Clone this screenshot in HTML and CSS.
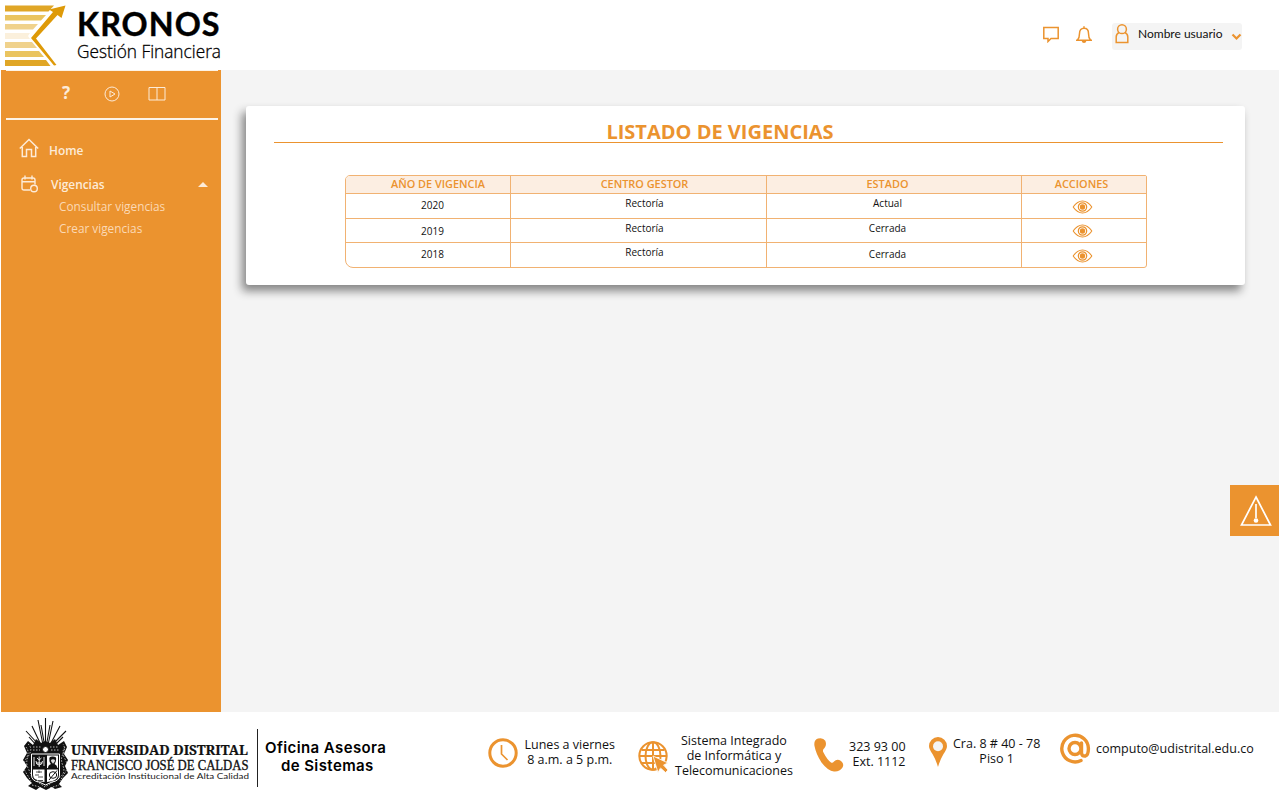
FILE: index.html
```html
<!DOCTYPE html>
<html lang="es">
<head>
<meta charset="utf-8">
<title>Kronos - Listado de vigencias</title>
<link rel="stylesheet" href="styles.css">
</head>
<body>
<header class="topbar">
  <svg class="brand" width="240" height="70" viewBox="0 0 240 70">
    <g>
      <path fill="#e0a626" d="M5 5.500H54L48.500 11.500H5z"/>
      <path fill="#eac45f" d="M5 15H46L41 20.500H5z"/>
      <path fill="#f0d28c" d="M5 24H38L33 29.500H5z"/>
      <path fill="#fbf0dc" d="M5 33H30L28 36L30 39H5z"/>
      <path fill="#f0d28c" d="M5 42H32L37 48H5z"/>
      <path fill="#eac45f" d="M5 51H39L44 57H5z"/>
      <path fill="#e0a626" d="M5 60H46L50.500 66H5z"/>
    </g>
    <path fill="#de9a08" d="M65.500 5.500L49 9.500L53 12L31 38L54 65.500L56.500 65L36 38.500L57.500 15L61.500 18z"/>
    <text class="brand-name" x="77" y="36" textLength="143.500" lengthAdjust="spacingAndGlyphs">KRONOS</text>
    <text class="brand-sub" x="77" y="57.500" textLength="144" lengthAdjust="spacingAndGlyphs">Gestión Financiera</text>
  </svg>
  <div class="actions">
    <svg width="16" height="17" viewBox="0 0 16 17"><path class="line" d="M.8 1.500H15.200V12.500H8L5 15.500V12.500H.8z"/></svg>
    <svg class="bell" width="18" height="18" viewBox="0 0 18 18"><path class="line" d="M1 14.200H17M2.500 14Q4.500 12 4.500 7.500C4.500 4 6.300 2.300 9 2.300S13.500 4 13.500 7.500Q13.500 12 15.500 14M9 .3V2"/><path fill="#eb932f" d="M6.500 14.500H11.500Q11 17 9 17T6.500 14.500"/></svg>
    <div class="user">
      <svg width="14" height="20" viewBox="0 0 14 20"><circle class="line" cx="7" cy="5.200" r="4.400"/><path class="line" d="M4 8.500Q1.200 10 1.200 13V18.500H12.800V13Q12.800 10 10 8.500"/></svg>
      <span>Nombre usuario</span>
      <svg width="11" height="8" viewBox="0 0 11 8"><path class="thick" d="M1.500 1.500L5.500 5.500L9.500 1.500"/></svg>
    </div>
  </div>
</header>
<div class="workspace">
  <nav class="sidebar">
    <div class="tools">
      <strong>?</strong>
      <svg class="play" width="16" height="16" viewBox="0 0 16 16"><circle cx="8" cy="8" r="7"/><path d="M6 5V11L11 8z"/></svg>
      <svg class="book" width="18" height="15" viewBox="0 0 18 15"><path d="M1 1.500H17V14H1zM9 1.500V14"/></svg>
    </div>
    <a class="item home">
      <svg width="20" height="20" viewBox="0 0 20 20"><path d="M.8 10.500L10 1.500L19.200 10.500M3.300 9V18.500H7.500V11.500H12.500V18.500H16.700V9"/></svg>
      <span>Home</span>
    </a>
    <a class="item group">
      <svg width="18" height="18" viewBox="0 0 18 18"><path d="M9 15H3Q1 15 1 13V5Q1 3 3 3H12Q14 3 14 5V9.500M1 6.700H14M4 .5V4.500M11 .5V4.500"/><circle cx="13" cy="13.500" r="3.300"/></svg>
      <span>Vigencias</span>
      <i class="caret"></i>
    </a>
    <a class="sub">Consultar vigencias</a>
    <a class="sub">Crear vigencias</a>
  </nav>
  <main class="content">
    <section class="card">
      <h1>LISTADO DE VIGENCIAS</h1>
      <div class="table">
        <div class="row head"><b>AÑO DE VIGENCIA</b><b>CENTRO GESTOR</b><b>ESTADO</b><b>ACCIONES</b></div>
        <div class="row r1"><span>2020</span><span>Rectoría</span><span>Actual</span><span><svg class="eye" width="20" height="14" viewBox="0 0 20 14"><path d="M.6 7Q5 1 10 1T19.400 7Q15 13 10 13T.6 7z"/><circle cx="10" cy="7" r="4.200"/><circle class="dot" cx="10" cy="7" r="2.700"/></svg></span></div>
        <div class="row r2"><span>2019</span><span>Rectoría</span><span>Cerrada</span><span><svg class="eye" width="20" height="14" viewBox="0 0 20 14"><path d="M.6 7Q5 1 10 1T19.400 7Q15 13 10 13T.6 7z"/><circle cx="10" cy="7" r="4.200"/><circle class="dot" cx="10" cy="7" r="2.700"/></svg></span></div>
        <div class="row r3"><span>2018</span><span>Rectoría</span><span>Cerrada</span><span><svg class="eye" width="20" height="14" viewBox="0 0 20 14"><path d="M.6 7Q5 1 10 1T19.400 7Q15 13 10 13T.6 7z"/><circle cx="10" cy="7" r="4.200"/><circle class="dot" cx="10" cy="7" r="2.700"/></svg></span></div>
      </div>
    </section>
    <div class="alert">
      <svg width="32" height="32" viewBox="0 0 32 32"><path d="M16 2L30.500 30H1.500z"/><path d="M16 9V23"/><circle cx="16" cy="25.500" r="2.300"/></svg>
    </div>
  </main>
</div>
<footer class="footer">
  <svg class="university" width="257" height="88" viewBox="0 0 257 88">
    <g stroke="#111" stroke-width="1.100" fill="none">
      <path d="M45.500 34V6M43 33L38 8M48 33L53 9M41 33L32 14M50 33L60 14M39 33L26 19M52 33L66 19M37 34L29 25M54 34L63 25M44 30L41 13M47 30L50 13"/>
    </g>
    <path fill="#111" d="M28 29L33 33L36 27L41 31L45 29L50 31L55 27L58 33L64 29L67 35L64 42L68 48L65 54L68 61L63 66L59 72L62 75L55 77L52 75L46 78L40 75L36 78L28 74L32 71L27 66L23 60L27 54L23 48L27 41L24 34z"/>
    <path fill="none" stroke="#fff" stroke-width=".7" stroke-dasharray="1.500 1.500" d="M28 32Q33 36 29 43T28 56T32 66L45 75L59 66Q66 61 63 54T63 42T63 32M26 35Q30 40 26 47T25 59T31 69M65 35Q61 40 65 47T66 59T60 69M32 73L40 75M50 76L59 73M33 35H41M50 35H59M33 38H40M51 38H59"/>
    <path fill="#111" stroke="#fff" d="M31.500 42H59.500V63Q59.500 69 52 70L45.500 73L39 70Q31.500 69 31.500 63z"/>
    <path fill="#fff" d="M47 43.500H58V56H47zM33 57.500H44.500V70Q33 69 33 63zM47 57.500H58V63Q58 69 47 70z"/>
    <circle cx="45.500" cy="37.500" r="3" fill="#fff" stroke="#111"/>
    <path fill="#111" d="M48 56Q48 53 51 52Q49 50 49.500 48Q48.500 44 53 44.500Q57 44.500 56 48Q56 50 54.500 52Q57 53 57.500 56z"/>
    <path fill="#ddd" d="M51 48Q53 46.500 55 48Q55 51 53 51.500Q51 51 51 48z"/>
    <path fill="none" stroke="#222" stroke-width=".8" d="M36 60H42M39 58.500V61M35 63H39M38 65H43M35 68H37M38 68.500H43"/>
    <path fill="none" stroke="#fff" stroke-width=".9" d="M39.200 44.500V55M37 46L39.200 48L41.500 46M36 49Q36 53 39.200 53T42.500 49M36.500 51H42M34 45V54M44 45V54"/>
    <path fill="none" stroke="#111" d="M49 68L57 58.500"/><ellipse cx="53" cy="63" rx="3.700" ry="3.300" fill="none" stroke="#111"/>
    <text class="uni-bold" x="71" y="43.300" textLength="177" lengthAdjust="spacingAndGlyphs">UNIVERSIDAD DISTRITAL</text>
    <text class="uni-name" x="71" y="58" textLength="177.500" lengthAdjust="spacingAndGlyphs">FRANCISCO JOSÉ DE CALDAS</text>
    <text class="uni-small" x="71" y="66.800" textLength="178" lengthAdjust="spacingAndGlyphs">Acreditación Institucional de Alta Calidad</text>
  </svg>
  <div class="office"><span>Oficina Asesora</span><span class="second">de Sistemas</span></div>
  <div class="contact hours">
    <svg width="30" height="30" viewBox="0 0 30 30"><circle cx="15" cy="15" r="13.200" fill="none" stroke="#eb932f" stroke-width="3"/><path fill="none" stroke="#eb932f" stroke-width="1.700" d="M13.500 7V16L19.500 22"/></svg>
    <p>Lunes a viernes<br>8 a.m. a 5 p.m.</p>
  </div>
  <div class="contact system">
    <svg width="31" height="32" viewBox="0 0 31 32"><g fill="none" stroke="#eb932f" stroke-width="2"><circle cx="15" cy="15" r="13.700"/><ellipse cx="15" cy="15" rx="7.500" ry="13.700"/><path d="M15 1V29M1.500 15H29M3.500 9H26.500M3.500 22H26.500"/></g><path fill="#eb932f" stroke="#fff" stroke-width=".8" d="M15 15L30 22L25.500 24L30 29L27.500 31.500L22.500 27L20 31.500z"/></svg>
    <p>Sistema Integrado<br>de Informática y<br>Telecomunicaciones</p>
  </div>
  <div class="contact phone">
    <svg width="30" height="34" viewBox="0 0 30 34"><path fill="#eb932f" d="M.5 8Q-.5 2 4 .6Q9-.8 11.300 2.800Q13 7 10.500 10Q8 12 9.500 14.500Q13 21.500 17 24.500Q18.500 25.500 20 23.500Q23 20.500 27 23Q30.500 26 28.500 29.500Q25.500 34 20 33.500Q14 33 7.500 24.500Q2 16 .5 8z"/></svg>
    <p>323 93 00<br>Ext. 1112</p>
  </div>
  <div class="contact address">
    <svg width="18" height="30" viewBox="0 0 18 30"><path fill="#eb932f" d="M9 30Q7 23 3.500 17Q0 12 0 9A9 9 0 0 1 18 9Q18 12 14.500 17Q11 23 9 30z"/><circle cx="9" cy="9.300" r="5" fill="#f4f4f4"/></svg>
    <p>Cra. 8 # 40 - 78<br>Piso 1</p>
  </div>
  <div class="contact mail">
    <svg width="31" height="31" viewBox="0 0 31 31"><g fill="none" stroke="#eb932f" stroke-width="3.400" stroke-linecap="round"><circle cx="15" cy="15.500" r="6"/><path d="M21.500 10V20Q22 23.500 25.500 23Q28.300 22 28.400 16A13.300 13.300 0 1 0 21 27.500"/></g></svg>
    <p>computo@udistrital.edu.co</p>
  </div>
</footer>
</body>
</html>
```

FILE: styles.css
```css
* { box-sizing: border-box; }
body { margin: 0; width: 1279px; height: 800px; overflow: hidden; background: #fff; font-family: "Open Sans", sans-serif; color: #111; }
svg { display: block; flex: none; }

.topbar { height: 70px; display: flex; justify-content: space-between; }
.brand-name { font: 700 31.500px Lato, sans-serif; fill: #000; stroke: #000; stroke-width: .4px; letter-spacing: 1px; }
.brand-sub { font: 300 18px "Open Sans", sans-serif; fill: #000; stroke: #000; stroke-width: .3px; }
.actions { display: flex; align-items: flex-start; padding: 23px 37px 0 0; }
.actions > svg { margin-top: 3px; margin-right: 16px; }
.actions > .bell { margin-right: 19px; }
.line { fill: none; stroke: #eb932f; stroke-width: 1.500; }
.thick { fill: none; stroke: #eb932f; stroke-width: 2.200; }
.user { width: 130px; height: 27px; display: flex; align-items: center; padding-left: 3px; background: #f4f4f4; border-radius: 3px; font: 12px/22px Lato, sans-serif; }
.user > svg:first-child { margin-top: -6px; }
.user span { width: 102px; padding: 0 0 5px 9px; white-space: nowrap; }

.workspace { display: flex; height: 642px; padding-left: 1px; }
.sidebar { width: 220px; flex: none; background: #eb932f; color: #fdebd8; }
.tools { height: 50px; margin: 0 3px 0 5px; display: flex; align-items: flex-start; border-top: 1px solid #fdf3e6; border-bottom: 2px solid #fdf3e6; padding: 11px 0 0 56px; }
.tools strong { width: 8px; font: 700 17px/22px "Noto Sans", sans-serif; }
.tools svg, .item svg { fill: none; stroke: #fdebd8; stroke-width: 1; }
.tools .play { margin: 4px 0 0 34px; }
.tools .book { margin: 4px 0 0 28px; }
.item { display: flex; align-items: center; font-size: 11.900px; font-weight: 600; }
.home { height: 20px; margin: 18px 0 0 18px; }
.item.home svg { stroke-width: 1.500; }
.home span { padding: 3px 0 0 10px; }
.group { height: 18px; margin: 17px 0 0 20px; }
.group span { padding: 0 0 1px 12px; width: 160px; }
.item.group svg { stroke-width: 1.400; }
.caret { border: 5px solid transparent; border-top: 0; border-bottom: 5px solid #fdebd8; margin-left: -1px; }
.sub { display: block; height: 22px; padding-left: 58px; font-size: 11.800px; line-height: 22px; color: #fbd9b5; }
.group + .sub { margin-top: 2px; }

.content { flex: 1; background: #f4f4f4; padding: 36px 0 0 25px; }
.card { width: 999px; height: 179px; padding: 14px 22px 0 28px; background: #fff; border-radius: 3px; box-shadow: -4px 6px 10px rgba(0,0,0,.46); }
h1 { margin: 0; height: 23px; padding-right: 57px; border-bottom: 1px solid #eb932f; font-size: 20px; line-height: 23px; font-weight: 700; text-align: center; color: #eb932f; }
.table { width: 802px; margin: 32px 0 0 71px; border: 1px solid #f1b272; border-radius: 5px 2px 3px 8px; overflow: hidden; font-size: 10px; line-height: 14px; }
.row { display: grid; grid-template-columns: 164px 256px 255px 1fr; height: 24.700px; border-top: 1px solid #f1b272; text-align: center; }
.row > * + * { border-left: 1px solid #f1b272; }
.row.head { height: 17px; border-top: 0; background: #fceee2; color: #eb932f; font-size: 10.900px; line-height: 15px; }
.row b { font-weight: 600; }
.row > :nth-child(1) { padding-left: 9px; }
.head > :nth-child(1) { padding-left: 20px; }
.row > :nth-child(2) { padding-left: 12px; }
.row > :nth-child(3) { padding-right: 13px; }
.row > :nth-child(4) { padding-right: 5px; }
.row span { padding-top: 2px; }
.r1 span:first-child, .r3 span:first-child, .r3 span:nth-child(3) { padding-top: 4px; }
.r2 span:first-child { padding-top: 5px; }
.row .eye { margin: 3.500px auto 0; fill: none; stroke: #eb932f; stroke-width: 1.200; transform: translateX(.5px); }
.eye .dot { fill: #eb932f; stroke: none; }
.alert { width: 49px; height: 51px; margin: 200px 0 0 auto; background: #eb932f; padding: 10px 0 0 10px; }
.alert svg { fill: none; stroke: #fff; stroke-width: 1.700; }
.alert circle { fill: #fff; stroke: none; }

.footer { height: 88px; display: grid; grid-template-columns: 257px 231px 150px 176px 115px 131px 1fr; background: #fff; }
.uni-bold { font: 700 13.800px "Noto Serif", "DejaVu Serif", serif; fill: #111; stroke: #111; stroke-width: .2px; }
.uni-name { font: 400 14.500px "Liberation Serif", serif; fill: #111; stroke: #111; stroke-width: .35px; }
.uni-small { font: 400 8px Lato, sans-serif; fill: #222; }
.office { height: 58px; margin-top: 17px; border-left: 1px solid #222; padding: 10px 0 0 7px; display: flex; flex-direction: column; font: 600 15px/18px Inter, sans-serif; color: #000; white-space: nowrap; letter-spacing: .4px; }
.office .second { padding-left: 16px; }
.contact { display: flex; align-items: flex-start; padding-top: 21px; }
.contact p { margin: 0; font-size: 12.500px; line-height: 15px; text-align: center; white-space: nowrap; }
.hours svg { margin-top: 5px; }
.hours p { margin: 4px 0 0 6.500px; }
.system svg { margin-top: 8px; }
.system p { margin-left: 6px; }
.phone svg { margin-top: 5px; }
.phone p { margin: 6px 0 0 5px; text-align: right; }
.address svg { margin-top: 4px; }
.address p { margin: 3px 0 0 6px; }
.mail p { margin: 8px 0 0 5px; }
```
